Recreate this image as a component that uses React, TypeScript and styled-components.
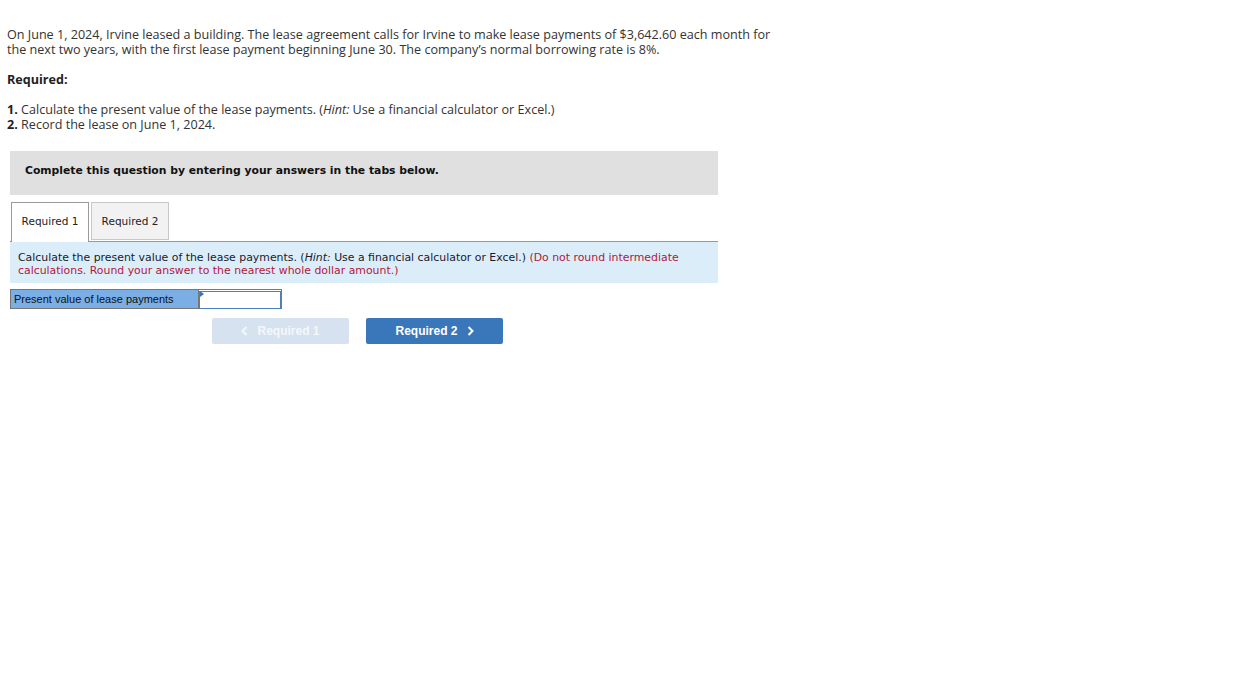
import styled, { createGlobalStyle } from 'styled-components';

const GlobalStyle = createGlobalStyle`
  html, body {
    margin: 0;
    padding: 0;
    background: #ffffff;
  }
`;

const Page = styled.div`
  width: 1236px;
  height: 686px;
  padding: 27px 0 0 7px;
  box-sizing: border-box;
  font-family: 'Open Sans', Lato, sans-serif;
  color: #333333;
`;

const Para = styled.p`
  margin: 0;
  width: 778px;
  font-size: 12.6px;
  line-height: 15px;
`;

const Heading = styled.p`
  margin: 15px 0 0;
  font-size: 12.6px;
  font-weight: 700;
  line-height: 15px;
  color: #222222;
`;

const List = styled.div`
  margin-top: 15px;
  font-size: 12.6px;
  line-height: 15px;

  b {
    font-weight: 700;
    color: #222222;
  }
`;

const Widget = styled.div`
  width: 708px;
  margin: 19px 0 0 3px;
  font-family: 'DejaVu Sans', Verdana, sans-serif;
`;

const Banner = styled.div`
  height: 44px;
  box-sizing: border-box;
  display: flex;
  align-items: center;
  padding: 0 0 6px 15px;
  background: #e0e0e0;
  font-size: 10.8px;
  font-weight: 700;
  color: #111111;
`;

const TabRow = styled.div`
  display: flex;
  gap: 2px;
  margin-top: 7px;
  padding-left: 1px;
  border-bottom: 1px solid #999999;
  height: 39px;
`;

const Tab = styled.div<{ $active?: boolean }>`
  width: 78px;
  height: ${(p) => (p.$active ? '40px' : '38px')};
  box-sizing: border-box;
  display: flex;
  align-items: center;
  justify-content: center;
  padding-bottom: ${(p) => (p.$active ? '3px' : '0')};
  font-size: 10.5px;
  color: #222222;
  background: ${(p) => (p.$active ? '#ffffff' : '#f2f2f2')};
  border: 1px solid ${(p) => (p.$active ? '#999999' : '#c8c8c8')};
  border-bottom: ${(p) => (p.$active ? 'none' : '1px solid #c8c8c8')};
  position: relative;
  z-index: 1;
`;

const Instructions = styled.div`
  background: #dcedfa;
  padding: 9px 8px 6px;
  font-size: 10.9px;
  line-height: 13px;
  color: #1a1a2a;

  em {
    font-style: italic;
  }
`;

const Note = styled.span`
  color: #b1183a;
`;

const AnswerRow = styled.div`
  display: flex;
  margin-top: 6px;
  font-family: 'Liberation Sans', Arial, sans-serif;
`;

const Label = styled.div`
  width: 188px;
  height: 20px;
  box-sizing: border-box;
  border: 1px solid #777777;
  border-right: none;
  background: #7aaee5;
  font-size: 11px;
  line-height: 18px;
  padding-left: 3px;
  color: #111111;
`;

const InputCell = styled.div`
  width: 84px;
  height: 20px;
  box-sizing: border-box;
  border: 1px solid #777777;
  position: relative;
  background: #ffffff;
`;

const Input = styled.input`
  width: 100%;
  height: 100%;
  box-sizing: border-box;
  border: 1px solid #4a7fc0;
  margin: 0;
  padding: 0 3px;
  outline: none;
  font-size: 11px;
`;

const Marker = styled.span`
  position: absolute;
  left: 1px;
  top: 1px;
  width: 0;
  height: 0;
  border-top: 3px solid transparent;
  border-bottom: 3px solid transparent;
  border-left: 4px solid #3a74b8;
`;

const NavRow = styled.div`
  display: flex;
  gap: 17px;
  margin: 9px 0 0 202px;
`;

const NavButton = styled.button<{ $disabled?: boolean }>`
  width: 137px;
  height: 26px;
  border: none;
  border-radius: 2px;
  display: flex;
  align-items: center;
  justify-content: center;
  gap: 9px;
  font-family: 'Liberation Sans', Arial, sans-serif;
  font-size: 12px;
  font-weight: 700;
  color: ${(p) => (p.$disabled ? '#f4f7fb' : '#ffffff')};
  background: ${(p) => (p.$disabled ? '#d6e2f0' : '#3a76ba')};
  cursor: ${(p) => (p.$disabled ? 'default' : 'pointer')};
  padding: 0;
`;

const Chevron = ({ dir }: { dir: 'left' | 'right' }) => (
  <svg width="7" height="10" viewBox="0 0 7 10">
    <path
      d={dir === 'left' ? 'M5.5 1 L1.5 5 L5.5 9' : 'M1.5 1 L5.5 5 L1.5 9'}
      fill="none"
      stroke="currentColor"
      strokeWidth="2"
    />
  </svg>
);

export default function App() {
  return (
    <Page>
      <GlobalStyle />
      <Para>
        On June 1, 2024, Irvine leased a building. The lease agreement calls for Irvine to make lease
        payments of $3,642.60 each month for the next two years, with the first lease payment beginning
        June 30. The company’s normal borrowing rate is 8%.
      </Para>
      <Heading>Required:</Heading>
      <List>
        <div>
          <b>1.</b> Calculate the present value of the lease payments. (<i>Hint:</i> Use a financial
          calculator or Excel.)
        </div>
        <div>
          <b>2.</b> Record the lease on June 1, 2024.
        </div>
      </List>

      <Widget>
        <Banner>Complete this question by entering your answers in the tabs below.</Banner>
        <TabRow>
          <Tab $active>Required 1</Tab>
          <Tab>Required 2</Tab>
        </TabRow>
        <Instructions>
          Calculate the present value of the lease payments. (<em>Hint:</em> Use a financial calculator
          or Excel.){' '}
          <Note>
            (Do not round intermediate calculations. Round your answer to the nearest whole dollar
            amount.)
          </Note>
        </Instructions>
        <AnswerRow>
          <Label>Present value of lease payments</Label>
          <InputCell>
            <Input type="text" />
            <Marker />
          </InputCell>
        </AnswerRow>
        <NavRow>
          <NavButton $disabled>
            <Chevron dir="left" />
            Required 1
          </NavButton>
          <NavButton>
            Required 2
            <Chevron dir="right" />
          </NavButton>
        </NavRow>
      </Widget>
    </Page>
  );
}
